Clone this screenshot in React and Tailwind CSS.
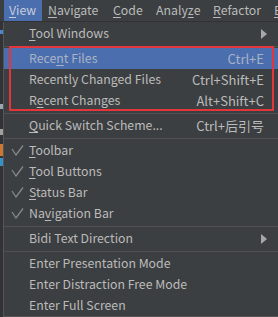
import React from 'react'

const font = { fontFamily: '"Noto Sans CJK SC", "Noto Sans", sans-serif' }

// underline one letter as a mnemonic
function M({ text, at }) {
  if (at == null) return <>{text}</>
  return (
    <>
      {text.slice(0, at)}
      <span className="underline underline-offset-2">{text[at]}</span>
      {text.slice(at + 1)}
    </>
  )
}

function Check() {
  return (
    <svg width="13" height="11" viewBox="0 0 13 11" fill="none">
      <polyline points="1,4 5,10 12,0.5" stroke="#85898c" strokeWidth="1.3" />
    </svg>
  )
}

function Row({ label, at, shortcut, checked, arrow, active }) {
  return (
    <div className={`h-[21px] flex items-center pr-[14px] ${active ? 'bg-[#4b6eaf] text-[#a9b3c4]' : 'text-[#bbbbbb]'}`}>
      <div className="w-[25px] flex justify-center pl-[1px]">{checked && <Check />}</div>
      <span className="flex-1 whitespace-nowrap text-[12.3px]"><M text={label} at={at} /></span>
      {shortcut && <span className="whitespace-nowrap">{shortcut}</span>}
      {arrow && (
        <svg width="6" height="10" viewBox="0 0 6 10" className="mr-[-3px]">
          <polygon points="0,0 6,5 0,10" fill="#a7a7a7" />
        </svg>
      )}
    </div>
  )
}

const Sep = () => (
  <div className="h-[4px] flex items-center">
    <div className="h-px w-full bg-[#515151]" />
  </div>
)

export default function App() {
  const menus = [
    { t: 'Navigate', at: 0, w: 'w-[65px]' },
    { t: 'Code', at: 0, w: 'w-[43px]' },
    { t: 'Analyze', at: 5, w: 'w-[57px]' },
    { t: 'Refactor', at: 0, w: 'w-[61px]' },
    { t: 'Build', at: 0, w: 'w-[40px]' },
  ]
  return (
    <div className="w-[278px] h-[317px] overflow-hidden bg-[#2b2b2b] text-[13px] leading-none" style={font}>
      {/* menu bar */}
      <div className="h-[22px] bg-[#3c3f41] flex items-stretch text-[#bbbbbb] text-[12.3px] whitespace-nowrap border-b border-[#323232] overflow-hidden">
        <div className="ml-[4px] w-[38px] shrink-0 bg-[#4b6eaf] flex items-center pl-[5px] text-[#c5cddb]">
          <M text="View" at={0} />
        </div>
        <div className="w-[6px] shrink-0" />
        {menus.map(m => (
          <div key={m.t} className={`${m.w} shrink-0 flex items-center`}>
            <M text={m.t} at={m.at} />
          </div>
        ))}
      </div>

      <div className="flex h-[295px]">
        {/* editor gutter behind the popup */}
        <div className="w-[3px] bg-[#313335] flex flex-col">
          <div className="h-[8px]" />
          <div className="h-[4px] bg-[#4a88c7]" />
          <div className="h-[70px]" />
          <div className="h-[5px] bg-[#9aa7b0]" />
          <div className="h-[20px]" />
          <div className="h-[6px] bg-[#a0a0a0]" />
          <div className="h-[9px]" />
          <div className="h-[12px] bg-[#cc7832]" />
          <div className="h-[2px]" />
          <div className="h-[8px] bg-[#3592c4]" />
        </div>

        {/* dropdown */}
        <div className="flex-1 relative bg-[#3c3f41] border-l border-b border-[#555555] h-[295px]">
          <div className="pt-[1px]">
            <Row label="Tool Windows" at={0} arrow />
            <Sep />
            <Row label="Recent Files" at={4} shortcut="Ctrl+E" active />
            <Row label="Recently Changed Files" shortcut="Ctrl+Shift+E" />
            <Row label="Recent Changes" at={1} shortcut="Alt+Shift+C" />
            <Sep />
            <Row label="Quick Switch Scheme..." at={0} shortcut="Ctrl+后引号" />
            <Sep />
            <Row label="Toolbar" at={0} checked />
            <Row label="Tool Buttons" at={0} checked />
            <Row label="Status Bar" at={0} checked />
            <Row label="Navigation Bar" at={2} checked />
            <Sep />
            <Row label="Bidi Text Direction" arrow />
            <Sep />
            <Row label="Enter Presentation Mode" />
            <Row label="Enter Distraction Free Mode" />
            <Row label="Enter Full Screen" />
          </div>
          {/* annotation box */}
          <div className="absolute left-[5px] top-[24px] w-[265px] h-[65px] border-2 border-[#e2363c] pointer-events-none" />
        </div>
      </div>
    </div>
  )
}
